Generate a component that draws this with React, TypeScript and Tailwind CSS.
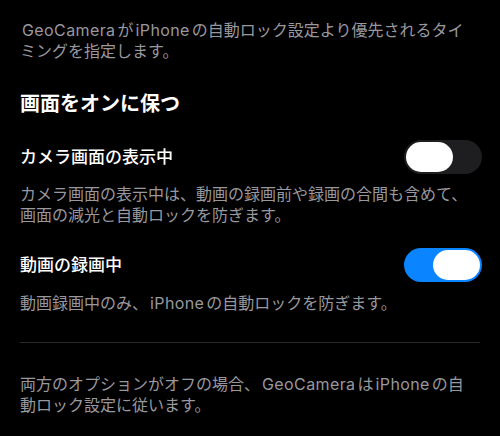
import React from "react";

function Toggle({ on }: { on: boolean }) {
  return (
    <div
      className={`relative w-[78px] h-[34px] rounded-full shrink-0 -mr-[2px] ${on ? "bg-[#0a84ff]" : "bg-[#1e1e20]"}`}
    >
      <div
        className={`absolute top-[2px] w-[47px] h-[30px] rounded-full bg-white ${on ? "right-[2px]" : "left-[2px]"}`}
      />
    </div>
  );
}

function L({ children }: { children: React.ReactNode }) {
  return <span className="tracking-[0.4px] mx-[2px]">{children}</span>;
}

export default function App() {
  return (
    <div
      className="w-[500px] h-[436px] bg-black px-5 pt-[20px] overflow-hidden"
      style={{ fontFamily: 'Inter, "Noto Sans CJK JP", sans-serif' }}
    >
      <p className="pr-[4px] text-[16px] leading-[21px] text-[#98989e]">
        <L>GeoCamera</L>が<L>iPhone</L>の自動ロック設定より優先されるタイミングを指定します。
      </p>

      <h2 className="mt-[28px] text-[20px] leading-[28px] font-bold text-white">
        画面をオンに保つ
      </h2>

      <div className="mt-[22px] flex items-center justify-between">
        <span className="text-[17px] leading-[22px] font-medium text-white">カメラ画面の表示中</span>
        <Toggle on={false} />
      </div>
      <p className="pr-[4px] mt-[10px] text-[16px] leading-[21px] text-[#98989e]">
        カメラ画面の表示中は、動画の録画前や録画の合間も含めて、画面の減光と自動ロックを防ぎます。
      </p>

      <div className="mt-[22px] flex items-center justify-between">
        <span className="text-[17px] leading-[22px] font-medium text-white">動画の録画中</span>
        <Toggle on={true} />
      </div>
      <p className="pr-[4px] mt-[11px] text-[16px] leading-[21px] text-[#98989e]">
        動画録画中のみ、<L>iPhone</L>の自動ロックを防ぎます。
      </p>

      <div className="mt-[28px] h-px bg-[#2a2a2c]" />

      <p className="pr-[4px] mt-[31px] text-[16px] leading-[21px] text-[#98989e]">
        両方のオプションがオフの場合、<L>GeoCamera</L>は<L>iPhone</L>の自動ロック設定に従います。
      </p>
    </div>
  );
}
